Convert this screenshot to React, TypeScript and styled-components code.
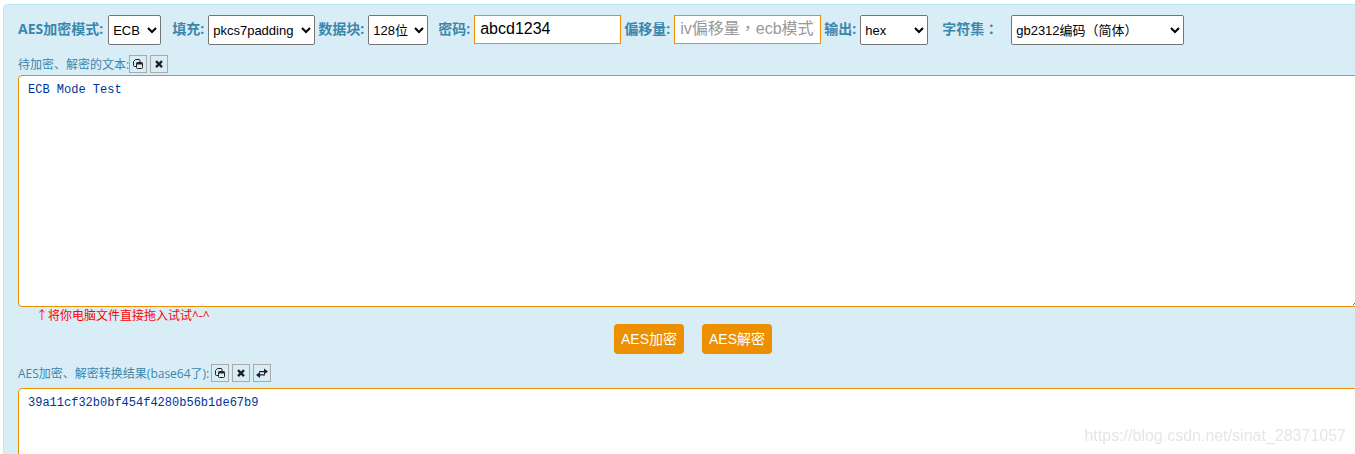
import React from "react";
import styled, { createGlobalStyle } from "styled-components";

const GlobalStyle = createGlobalStyle`
  *, *::before, *::after { box-sizing: border-box; }
  body {
    margin: 0;
    background: #fff;
    color: #3a87ad;
    font: 12px/16px "Open Sans", "Noto Sans CJK SC", sans-serif;
    overflow: hidden;
  }
`;

const orange = "#ec8f00";
const sans = `"Liberation Sans", "Noto Sans CJK SC", sans-serif`;
// The TC face centres full-width punctuation in its cell.
const fieldSans = `"Liberation Sans", "Noto Sans CJK TC", sans-serif`;

const Page = styled.div`
  height: 100vh;
  overflow: hidden;
  padding: 4px 0 0 3px;
`;

const Panel = styled.main`
  margin-right: -22px;
  padding: 10px 14px 8px 14px;
  background: #d9edf7;
  border: 1px solid #bce8f1;
  border-radius: 4px;
`;

const Toolbar = styled.div`
  display: flex;
  flex-wrap: wrap;
  align-items: flex-start;
  min-height: 30px;
`;

const Field = styled.div<{ $after?: number; $gap?: number }>`
  display: flex;
  align-items: center;
  gap: ${(p) => p.$gap ?? 4}px;
  margin-right: ${(p) => p.$after ?? 3}px;
`;

const FieldLabel = styled.label`
  padding-bottom: 2px;
  font-family: "Open Sans", "Noto Sans CJK TC", sans-serif;
  font-size: 14px;
  font-weight: 700;
  line-height: 20px;
  white-space: nowrap;
`;

const Select = styled.select<{ $width: number }>`
  width: ${(p) => p.$width}px;
  height: 30px;
  padding: 0;
  border: 1px solid #767676;
  border-radius: 2px;
  background-color: #fff;
  color: #000;
  font: 13px ${fieldSans};
`;

const TextInput = styled.input`
  width: 147px;
  height: 29px;
  padding: 0 5px 2px;
  border: 1px solid ${orange};
  border-radius: 0;
  background: #fff;
  color: #000;
  font: 16px ${fieldSans};

  &::placeholder { color: #999; }
`;

const Caption = styled.div<{ $below: number; $gap?: number }>`
  display: flex;
  align-items: center;
  gap: ${(p) => p.$gap ?? 0}px;
  height: 18px;
  margin: 10px 0 ${(p) => p.$below}px;

  label { padding-top: 2px; }
`;

const Tools = styled.div`
  display: flex;
  gap: 3px;
`;

const IconButton = styled.button`
  display: flex;
  align-items: center;
  justify-content: center;
  width: 18px;
  height: 18px;
  padding: 0;
  border: 1px solid #aaa;
  background: transparent;
  color: #222;
`;

const TextBox = styled.textarea`
  display: block;
  width: 100%;
  height: 232px;
  padding: 6px 9px;
  border: 1px solid ${orange};
  border-radius: 4px;
  background: #fff;
  color: #039;
  font: 12px/16px "Liberation Mono", "Noto Sans CJK SC", monospace;
`;

const Hint = styled.p`
  margin: 0 0 0 18px;
  padding-top: 1px;
  color: #f00;
`;

const Actions = styled.div`
  display: flex;
  justify-content: center;
  gap: 18px;
  padding-left: 6px;
`;

const ActionButton = styled.button`
  width: 70px;
  height: 30px;
  padding: 0 0 2px;
  border: 0;
  border-radius: 4px;
  background: ${orange};
  color: #fff;
  font: 14px ${sans};
`;

const Watermark = styled.div`
  position: fixed;
  right: 9px;
  bottom: 8px;
  color: #e6e6e6;
  font: 16px/20px ${sans};
  pointer-events: none;
`;

const Svg = styled.svg`
  display: block;
  width: 12px;
  height: 12px;
`;

const CopyIcon = () => (
  <Svg viewBox="0 0 12 12" fill="none" stroke="currentColor" aria-hidden="true">
    <path d="M4 8.5H2.5Q1.5 8.5 1.5 7.5V3.5L3.5 1.5H7Q8 1.5 8 2.5V4" />
    <rect x="4.5" y="4.5" width="6" height="6" rx="1" />
    <path d="M4.5 5.5h6" strokeWidth="2" />
  </Svg>
);

const ClearIcon = () => (
  <Svg viewBox="0 0 12 12" fill="none" stroke="currentColor" strokeWidth="2.4" aria-hidden="true">
    <path d="M3 3.2 9 9.2M9 3.2 3 9.2" />
  </Svg>
);

const SwapIcon = () => (
  <Svg viewBox="0 0 12 12" fill="currentColor" aria-hidden="true">
    <path d="M8 1.5 12 4.5 8 7.5V5.3H3V4H8Z" />
    <path d="M4 5 0 8 4 11V8.6H9V7.3H4Z" />
  </Svg>
);

export default function App() {
  return (
    <Page>
      <GlobalStyle />
      <Panel>
        <Toolbar>
          <Field $after={11} $gap={5}>
            <FieldLabel htmlFor="mode">AES加密模式:</FieldLabel>
            <Select id="mode" $width={53}><option>ECB</option></Select>
          </Field>
          <Field>
            <FieldLabel htmlFor="padding">填充:</FieldLabel>
            <Select id="padding" $width={107}><option>pkcs7padding</option></Select>
          </Field>
          <Field $after={10}>
            <FieldLabel htmlFor="block">数据块:</FieldLabel>
            <Select id="block" $width={60}><option>128位</option></Select>
          </Field>
          <Field>
            <FieldLabel htmlFor="key">密码:</FieldLabel>
            <TextInput id="key" type="text" defaultValue="abcd1234" />
          </Field>
          <Field>
            <FieldLabel htmlFor="iv">偏移量:</FieldLabel>
            <TextInput id="iv" type="text" placeholder="iv偏移量，ecb模式不用填写" />
          </Field>
          <Field $after={14}>
            <FieldLabel htmlFor="output">输出:</FieldLabel>
            <Select id="output" $width={68}><option>hex</option></Select>
          </Field>
          <Field $gap={13}>
            <FieldLabel htmlFor="charset">字符集：</FieldLabel>
            <Select id="charset" $width={173}><option>gb2312编码（简体）</option></Select>
          </Field>
        </Toolbar>

        <Caption $below={2}>
          <label htmlFor="source">待加密、解密的文本:</label>
          <Tools>
            <IconButton type="button" aria-label="复制"><CopyIcon /></IconButton>
            <IconButton type="button" aria-label="清空"><ClearIcon /></IconButton>
          </Tools>
        </Caption>
        <TextBox id="source" spellCheck={false} defaultValue="ECB Mode Test" />
        <Hint>↑将你电脑文件直接拖入试试^-^</Hint>

        <Actions>
          <ActionButton type="button">AES加密</ActionButton>
          <ActionButton type="button">AES解密</ActionButton>
        </Actions>

        <Caption $below={6} $gap={2}>
          <label htmlFor="result">AES加密、解密转换结果(base64了):</label>
          <Tools>
            <IconButton type="button" aria-label="复制"><CopyIcon /></IconButton>
            <IconButton type="button" aria-label="清空"><ClearIcon /></IconButton>
            <IconButton type="button" aria-label="交换"><SwapIcon /></IconButton>
          </Tools>
        </Caption>
        <TextBox id="result" spellCheck={false} defaultValue="39a11cf32b0bf454f4280b56b1de67b9" />
      </Panel>
      <Watermark>https://blog.csdn.net/sinat_28371057</Watermark>
    </Page>
  );
}
